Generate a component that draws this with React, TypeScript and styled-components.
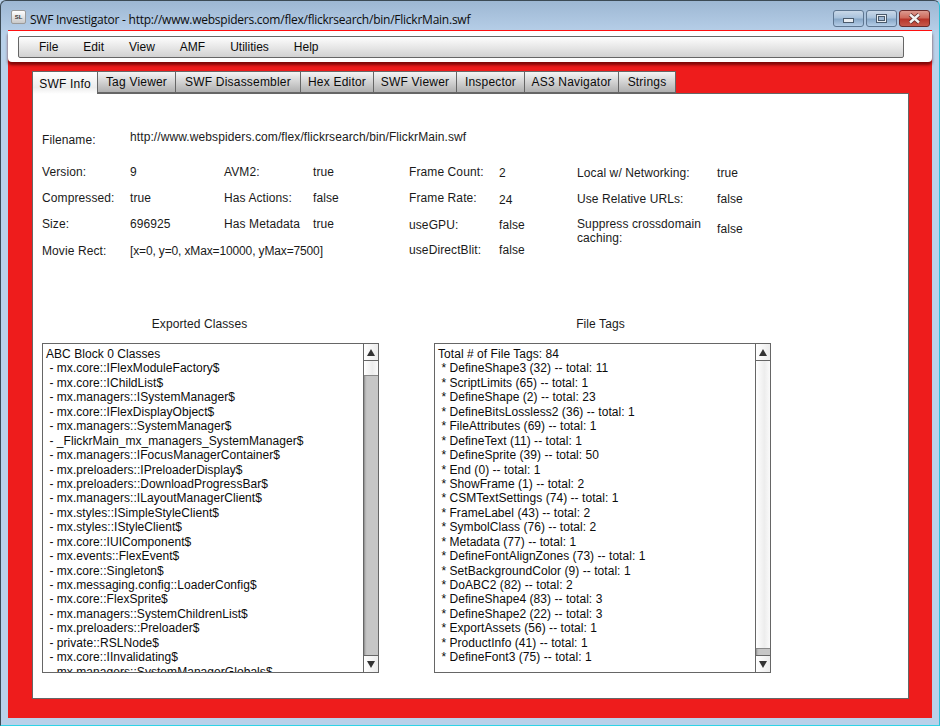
import React from 'react';
import styled, { createGlobalStyle } from 'styled-components';

const GlobalStyle = createGlobalStyle`
  html, body {
    margin: 0;
    padding: 0;
    width: 940px;
    height: 726px;
    overflow: hidden;
    background: #b9d1ea;
  }
  * { box-sizing: border-box; }
`;

const WindowFrame = styled.div`
  width: 940px;
  height: 726px;
  display: flex;
  flex-direction: column;
  padding: 0 7px 7px 7px;
  background: linear-gradient(180deg, #9db7d3 0, #b9d1ea 34px, #b9d1ea 100%);
  border: 1px solid #3c4a55;
  border-bottom-color: #2fd3e6;
  border-right-color: #2fbfd6;
  border-top-left-radius: 6px;
  border-top-right-radius: 6px;
`;

const TitleBar = styled.div`
  height: 29px;
  flex: none;
  margin: 0 -7px;
  padding: 2px 9px 0 10px;
  display: flex;
  align-items: center;
`;

const AppIcon = styled.div`
  width: 15px;
  height: 14px;
  margin-right: 4px;
  border-radius: 2px;
  border: 1px solid #9a9a9a;
  background: linear-gradient(180deg, #ffffff, #c9c9c9);
  color: #333;
  font: bold 6px 'Liberation Sans', sans-serif;
  display: flex;
  align-items: center;
  justify-content: center;
`;

const TitleText = styled.div`
  flex: 1;
  padding-top: 5px;
  font: 12px 'Open Sans', 'Liberation Sans', sans-serif;
  letter-spacing: -0.24px;
  color: #0c0c0c;
  white-space: nowrap;
`;

const Controls = styled.div`
  display: flex;
  gap: 2px;
  align-self: flex-start;
  margin-top: 7px;
`;

const ControlButton = styled.div<{ $close?: boolean }>`
  width: 31px;
  height: 17px;
  border: 1px solid ${({ $close }) => ($close ? '#6b2a2a' : '#5d7590')};
  border-radius: 3px;
  background: ${({ $close }) =>
    $close
      ? 'linear-gradient(180deg, #dc9a90 0, #cf6a5c 45%, #b8352a 55%, #c6594c 100%)'
      : 'linear-gradient(180deg, #c9d8e8 0, #a9c2dc 45%, #88a8c8 55%, #b4cde6 100%)'};
  display: flex;
  align-items: center;
  justify-content: center;
`;

const MinGlyph = styled.div`
  width: 11px;
  height: 5px;
  margin-top: 4px;
  background: #e8edf2;
  border: 1px solid #4a5a6c;
`;

const MaxGlyph = styled.div`
  width: 11px;
  height: 9px;
  background: #e8edf2;
  border: 1px solid #4a5a6c;
  display: flex;
  align-items: center;
  justify-content: center;

  &::after {
    content: '';
    width: 5px;
    height: 3px;
    background: #9db7d3;
    border: 1px solid #4a5a6c;
  }
`;

const Stage = styled.div`
  flex: 1;
  min-height: 0;
  background: #ee1c1c;
  border-top: 1px solid #ff1010;
  display: flex;
  flex-direction: column;
`;

const MenuStrip = styled.div`
  height: 31px;
  flex: none;
  background: #fff;
  border-radius: 0 0 4px 4px;
  padding: 5px 28px 4px 10px;
  box-shadow: 0 3px 3px rgba(90, 0, 0, 0.75);
`;

const MenuBar = styled.div`
  height: 22px;
  display: flex;
  align-items: center;
  padding-left: 20px;
  gap: 25px;
  background: linear-gradient(180deg, #fdfdfd, #d2d2d2);
  border: 1px solid #666;
  border-radius: 2px;
`;

const MenuItem = styled.span`
  font: 12px 'Liberation Sans', sans-serif;
  color: #0b0b0b;
`;

const Content = styled.div`
  flex: 1;
  min-height: 0;
  padding: 9px 23px 19px 24px;
  display: flex;
  flex-direction: column;
`;

const TabRow = styled.div`
  height: 23px;
  flex: none;
  display: flex;
  margin-bottom: -1px;
  position: relative;
  z-index: 1;
`;

const Tab = styled.div<{ $active?: boolean; $width: number }>`
  width: ${({ $width }) => $width}px;
  height: ${({ $active }) => ($active ? '23px' : '22px')};
  padding-top: ${({ $active }) => ($active ? '2px' : '0')};
  display: flex;
  align-items: center;
  justify-content: center;
  font: 12px 'Liberation Sans', sans-serif;
  letter-spacing: 0.2px;
  color: #0b0b0b;
  border: 1px solid #666;
  border-left-width: ${({ $active }) => ($active ? '1px' : '0')};
  border-bottom-width: ${({ $active }) => ($active ? '0' : '1px')};
  background: ${({ $active }) =>
    $active ? 'linear-gradient(180deg, #ffffff, #ececec 70%, #ffffff)' : 'linear-gradient(180deg, #f4f4f4, #b0b0b0)'};
`;

const Panel = styled.div`
  flex: 1;
  min-height: 0;
  background: #fff;
  border: 1px solid #666;
  padding: 34px 0 0 9px;
  display: flex;
  flex-direction: column;
`;

const Text = styled.div`
  font: 12px 'Liberation Sans', sans-serif;
  letter-spacing: 0.1px;
  color: #1a1a1a;
  line-height: 14px;
`;

const FilenameRow = styled.div`
  display: grid;
  grid-template-columns: 88px 1fr;
  height: 37px;
`;

const FilenameValue = styled(Text)`
  padding-top: 2px;
`;

const FilenameLabel = styled(Text)`
  padding-top: 5px;
`;

const InfoGrid = styled.div`
  display: grid;
  grid-template-columns: 88px 94px 89px 96px 90px 78px 140px 1fr;
  grid-auto-rows: 26px;
  height: 152px;
`;

const Cell = styled(Text)<{ $shift?: number; $span?: number; $tight?: boolean }>`
  padding-top: ${({ $shift }) => $shift ?? 0}px;
  grid-column: span ${({ $span }) => $span ?? 1};
  letter-spacing: ${({ $tight }) => ($tight ? '-0.14px' : '0.1px')};
`;

const ListsRow = styled.div`
  display: flex;
  gap: 55px;
`;

const ListColumn = styled.div`
  width: 337px;
  display: flex;
  flex-direction: column;
  align-items: center;
`;

const ListTitle = styled(Text)<{ $nudge: number }>`
  height: 26px;
  margin-left: ${({ $nudge }) => $nudge}px;
`;

const ListBox = styled.div`
  width: 337px;
  height: 330px;
  border: 1px solid #666;
  display: flex;
  align-self: stretch;
`;

const ListText = styled.div`
  flex: 1;
  min-width: 0;
  overflow: hidden;
  padding: 3px 0 0 3px;
  font: 12px 'Liberation Sans', sans-serif;
  letter-spacing: 0.05px;
  line-height: 14.45px;
  color: #0b0b0b;
  white-space: nowrap;
`;

const ListLine = styled.div`
  white-space: pre;
  height: 14.45px;
`;

const ScrollBar = styled.div`
  width: 15px;
  flex: none;
  border-left: 1px solid #666;
  display: flex;
  flex-direction: column;
  background: #c6c6c6;
  box-shadow: inset 2px 0 2px -1px #8a8a8a;
`;

const ArrowButton = styled.div<{ $down?: boolean }>`
  height: 17px;
  flex: none;
  background: linear-gradient(90deg, #fff, #ececec);
  border-${({ $down }) => ($down ? 'top' : 'bottom')}: 1px solid #666;
  display: flex;
  align-items: center;
  justify-content: center;

  &::after {
    content: '';
    border-left: 4px solid transparent;
    border-right: 4px solid transparent;
    ${({ $down }) => ($down ? 'border-top' : 'border-bottom')}: 7px solid #333;
  }
`;

const Thumb = styled.div<{ $size: number }>`
  height: ${({ $size }) => $size}px;
  flex: none;
  background: linear-gradient(90deg, #fff, #ededed 60%, #fafafa);
  border-bottom: 1px solid #888;
`;

const Track = styled.div`
  flex: 1;
`;

const menus = ['File', 'Edit', 'View', 'AMF', 'Utilities', 'Help'];
const tabs: [string, number][] = [
  ['SWF Info', 66],
  ['Tag Viewer', 78],
  ['SWF Disassembler', 125],
  ['Hex Editor', 73],
  ['SWF Viewer', 83],
  ['Inspector', 68],
  ['AS3 Navigator', 94],
  ['Strings', 57],
];

interface InfoCell {
  text: string;
  shift?: number;
  span?: number;
  tight?: boolean;
}

// cells of the info grid, row by row, with the small vertical offsets of the original form
const infoCells: InfoCell[] = [
  { text: 'Version:' }, { text: '9' }, { text: 'AVM2:' }, { text: 'true' },
  { text: 'Frame Count:' }, { text: '2', shift: 1 }, { text: 'Local w/ Networking:', shift: 1 }, { text: 'true', shift: 1 },
  { text: 'Compressed:' }, { text: 'true' }, { text: 'Has Actions:' }, { text: 'false' },
  { text: 'Frame Rate:' }, { text: '24', shift: 2 }, { text: 'Use Relative URLs:', shift: 1 }, { text: 'false', shift: 1 },
  { text: 'Size:' }, { text: '696925' }, { text: 'Has Metadata' }, { text: 'true' },
  { text: 'useGPU:', shift: 1 }, { text: 'false', shift: 1 }, { text: 'Suppress crossdomain caching:' }, { text: 'false', shift: 5 },
  { text: 'Movie Rect:', shift: 1 }, { text: '[x=0, y=0, xMax=10000, yMax=7500]', shift: 1, span: 3, tight: true },
  { text: 'useDirectBlit:' }, { text: 'false' },
];

const classes = [
  'ABC Block 0 Classes',
  ' - mx.core::IFlexModuleFactory$',
  ' - mx.core::IChildList$',
  ' - mx.managers::ISystemManager$',
  ' - mx.core::IFlexDisplayObject$',
  ' - mx.managers::SystemManager$',
  ' - _FlickrMain_mx_managers_SystemManager$',
  ' - mx.managers::IFocusManagerContainer$',
  ' - mx.preloaders::IPreloaderDisplay$',
  ' - mx.preloaders::DownloadProgressBar$',
  ' - mx.managers::ILayoutManagerClient$',
  ' - mx.styles::ISimpleStyleClient$',
  ' - mx.styles::IStyleClient$',
  ' - mx.core::IUIComponent$',
  ' - mx.events::FlexEvent$',
  ' - mx.core::Singleton$',
  ' - mx.messaging.config::LoaderConfig$',
  ' - mx.core::FlexSprite$',
  ' - mx.managers::SystemChildrenList$',
  ' - mx.preloaders::Preloader$',
  ' - private::RSLNode$',
  ' - mx.core::IInvalidating$',
  ' - mx.managers::SystemManagerGlobals$',
];

const fileTags = [
  'Total # of File Tags: 84',
  ' * DefineShape3 (32) -- total: 11',
  ' * ScriptLimits (65) -- total: 1',
  ' * DefineShape (2) -- total: 23',
  ' * DefineBitsLossless2 (36) -- total: 1',
  ' * FileAttributes (69) -- total: 1',
  ' * DefineText (11) -- total: 1',
  ' * DefineSprite (39) -- total: 50',
  ' * End (0) -- total: 1',
  ' * ShowFrame (1) -- total: 2',
  ' * CSMTextSettings (74) -- total: 1',
  ' * FrameLabel (43) -- total: 2',
  ' * SymbolClass (76) -- total: 2',
  ' * Metadata (77) -- total: 1',
  ' * DefineFontAlignZones (73) -- total: 1',
  ' * SetBackgroundColor (9) -- total: 1',
  ' * DoABC2 (82) -- total: 2',
  ' * DefineShape4 (83) -- total: 3',
  ' * DefineShape2 (22) -- total: 3',
  ' * ExportAssets (56) -- total: 1',
  ' * ProductInfo (41) -- total: 1',
  ' * DefineFont3 (75) -- total: 1',
];

const ScrollList: React.FC<{ title: string; nudge: number; lines: string[]; thumb: number }> = ({ title, nudge, lines, thumb }) => (
  <ListColumn>
    <ListTitle $nudge={nudge}>{title}</ListTitle>
    <ListBox>
      <ListText>
        {lines.map((line) => (
          <ListLine key={line}>{line}</ListLine>
        ))}
      </ListText>
      <ScrollBar>
        <ArrowButton />
        <Thumb $size={thumb} />
        <Track />
        <ArrowButton $down />
      </ScrollBar>
    </ListBox>
  </ListColumn>
);

const App: React.FC = () => (
  <>
    <GlobalStyle />
    <WindowFrame>
      <TitleBar>
        <AppIcon>SL</AppIcon>
        <TitleText>SWF Investigator - http://www.webspiders.com/flex/flickrsearch/bin/FlickrMain.swf</TitleText>
        <Controls>
          <ControlButton><MinGlyph /></ControlButton>
          <ControlButton><MaxGlyph /></ControlButton>
          <ControlButton $close>
            <svg width="15" height="11" viewBox="0 0 15 11">
              <path d="M3 1.5 L12 9.5 M12 1.5 L3 9.5" stroke="#5a2a2a" strokeWidth="4" />
              <path d="M3 1.5 L12 9.5 M12 1.5 L3 9.5" stroke="#f2f2f2" strokeWidth="2.4" />
            </svg>
          </ControlButton>
        </Controls>
      </TitleBar>
      <Stage>
        <MenuStrip>
          <MenuBar>
            {menus.map((m) => (
              <MenuItem key={m}>{m}</MenuItem>
            ))}
          </MenuBar>
        </MenuStrip>
        <Content>
          <TabRow>
            {tabs.map(([label, width], i) => (
              <Tab key={label} $width={width} $active={i === 0}>{label}</Tab>
            ))}
          </TabRow>
          <Panel>
            <FilenameRow>
              <FilenameLabel>Filename:</FilenameLabel>
              <FilenameValue>http://www.webspiders.com/flex/flickrsearch/bin/FlickrMain.swf</FilenameValue>
            </FilenameRow>
            <InfoGrid>
              {infoCells.map((cell, i) => (
                <Cell key={i} $shift={cell.shift} $span={cell.span} $tight={cell.tight}>{cell.text}</Cell>
              ))}
            </InfoGrid>
            <ListsRow>
              <ScrollList title="Exported Classes" nudge={-22} lines={classes} thumb={15} />
              <ScrollList title="File Tags" nudge={-4} lines={fileTags} thumb={288} />
            </ListsRow>
          </Panel>
        </Content>
      </Stage>
    </WindowFrame>
  </>
);

export default App;
